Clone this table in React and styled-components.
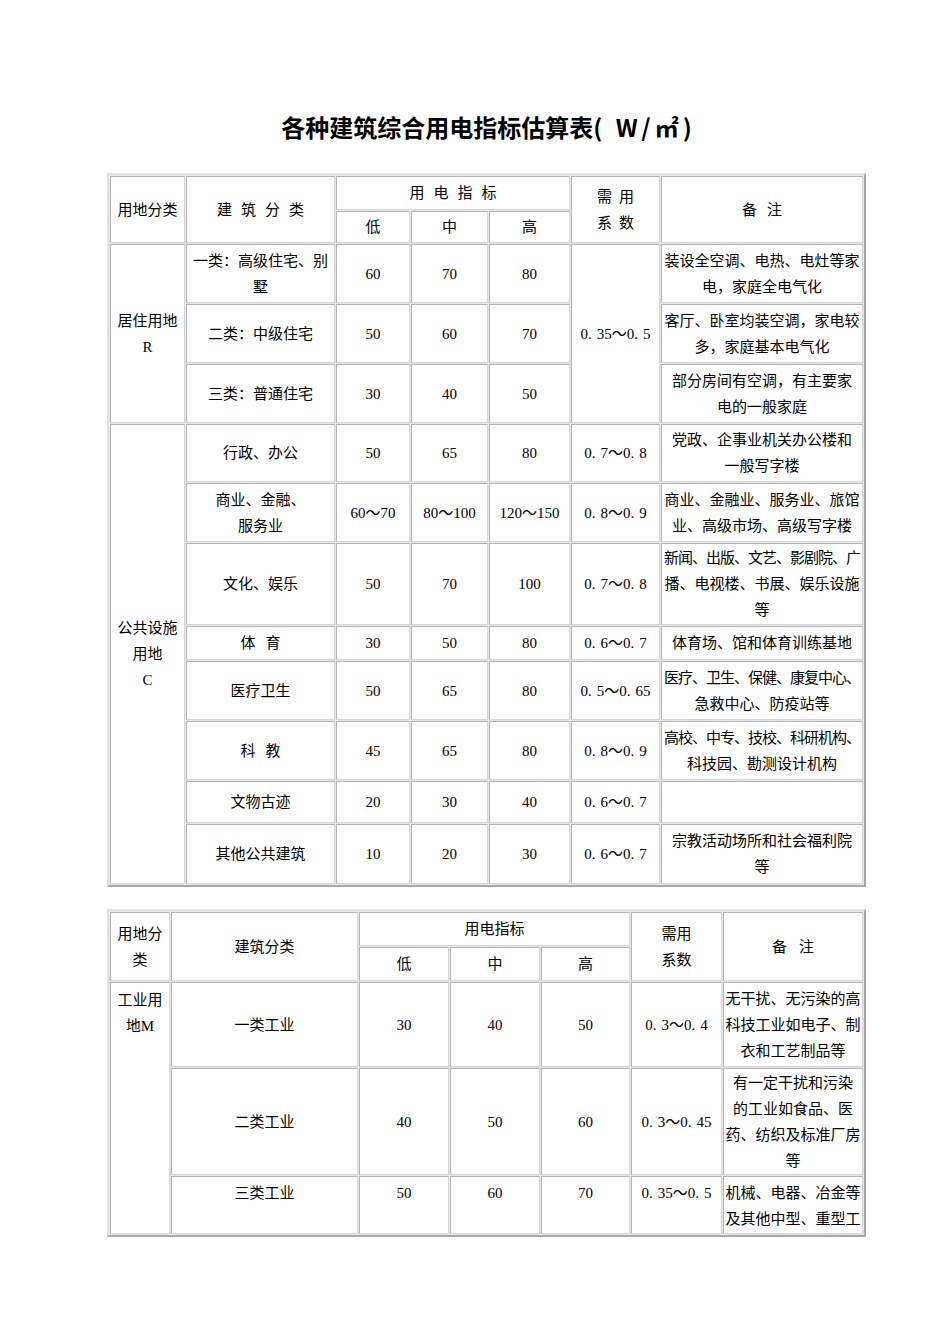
import React from 'react';
import styled, { createGlobalStyle } from 'styled-components';

const GlobalStyle = createGlobalStyle`
  html, body {
    margin: 0;
    padding: 0;
    background: #fff;
  }
  body {
    font-family: "Liberation Serif", "Noto Sans CJK SC", serif;
    color: #000;
  }
`;

const Page = styled.div`
  width: 950px;
  min-height: 1344px;
  box-sizing: border-box;
  padding: 111px 0 0 107px;
`;

const Sheet = styled.div`
  width: 759px;
  display: flex;
  flex-direction: column;
  gap: 22px;
`;

const Title = styled.h1`
  margin: 0 0 8px;
  font: bold 24px/32px "Noto Sans CJK SC", sans-serif;
  text-align: center;
  color: #000;
`;

const Unit = styled.span`
  letter-spacing: 4px;
  margin-right: -4px;
`;

const Table = styled.table`
  width: 759px;
  table-layout: fixed;
  border-collapse: separate;
  border-spacing: 1px;
  border: 2px solid;
  border-color: #e2e2e2 #a8a8a8 #a8a8a8 #e2e2e2;
  background: #e6e6e6;
  font-size: 15px;
  line-height: 26px;
`;

const Row = styled.tr`
  height: ${({ $h }) => $h}px;

  ${({ $top }) =>
    $top &&
    `
    & > td {
      vertical-align: top;
      padding-top: ${$top}px;
    }
  `}
`;

const Cell = styled.td`
  border: 1px solid;
  border-color: #b4b4b4 #d6d6d6 #d6d6d6 #b4b4b4;
  background: #fff;
  padding: ${({ $top }) => ($top ? `${$top}px 1px 0` : '0 1px')};
  text-align: center;
  vertical-align: ${({ $top }) => ($top ? 'top' : 'middle')};
  white-space: nowrap;
  overflow: hidden;
`;

const Spread = styled.span`
  letter-spacing: ${({ $gap }) => $gap}px;
  margin-right: -${({ $gap }) => $gap}px;
`;

const Tight = styled.span`
  letter-spacing: -1px;
`;

const Dot = styled.span`
  margin-right: 5px;
`;

// decimals are set with a wide point, as in the original document font
const Num = ({ value }) => {
  const parts = value.split('.');
  return parts.map((p, i) => (
    <React.Fragment key={i}>
      {i > 0 && <Dot>.</Dot>}
      {p}
    </React.Fragment>
  ));
};

const Cols = ({ widths }) => (
  <colgroup>
    {widths.map((w, i) => (
      <col key={i} style={{ width: w }} />
    ))}
  </colgroup>
);

const Vals = ({ items }) =>
  items.map((v, i) => (
    <Cell key={i}>
      <Num value={v} />
    </Cell>
  ));

const App = () => (
  <>
    <GlobalStyle />
    <Page>
      <Sheet>
        <Title>
          各种建筑综合用电指标估算表<Unit>( W/㎡)</Unit>
        </Title>

        <Table>
          <Cols widths={[75, 149, 74, 77, 81, 89, 202]} />
          <tbody>
            <Row $h={34}>
              <Cell rowSpan={2}>用地分类</Cell>
              <Cell rowSpan={2}>
                <Spread $gap={9}>建筑分类</Spread>
              </Cell>
              <Cell colSpan={3}>
                <Spread $gap={9}>用电指标</Spread>
              </Cell>
              <Cell rowSpan={2}>
                <Spread $gap={7}>需用</Spread>
                <br />
                <Spread $gap={7}>系数</Spread>
              </Cell>
              <Cell rowSpan={2}>
                <Spread $gap={10}>备注</Spread>
              </Cell>
            </Row>
            <Row $h={32}>
              <Vals items={['低', '中', '高']} />
            </Row>

            <Row $h={59}>
              <Cell rowSpan={3}>
                居住用地
                <br />R
              </Cell>
              <Cell>
                一类：高级住宅、别
                <br />墅
              </Cell>
              <Vals items={['60', '70', '80']} />
              <Cell rowSpan={3}>
                <Num value="0.35～0.5" />
              </Cell>
              <Cell>
                装设全空调、电热、电灶等家
                <br />电，家庭全电气化
              </Cell>
            </Row>
            <Row $h={59}>
              <Cell>二类：中级住宅</Cell>
              <Vals items={['50', '60', '70']} />
              <Cell>
                客厅、卧室均装空调，家电较
                <br />多，家庭基本电气化
              </Cell>
            </Row>
            <Row $h={59}>
              <Cell>三类：普通住宅</Cell>
              <Vals items={['30', '40', '50']} />
              <Cell>
                部分房间有空调，有主要家
                <br />电的一般家庭
              </Cell>
            </Row>

            <Row $h={58}>
              <Cell rowSpan={8}>
                公共设施
                <br />
                用地
                <br />C
              </Cell>
              <Cell>行政、办公</Cell>
              <Vals items={['50', '65', '80', '0.7～0.8']} />
              <Cell>
                党政、企事业机关办公楼和
                <br />
                一般写字楼
              </Cell>
            </Row>
            <Row $h={59}>
              <Cell>
                商业、金融、
                <br />
                服务业
              </Cell>
              <Vals items={['60～70', '80～100', '120～150', '0.8～0.9']} />
              <Cell>
                商业、金融业、服务业、旅馆
                <br />
                业、高级市场、高级写字楼
              </Cell>
            </Row>
            <Row $h={82}>
              <Cell>文化、娱乐</Cell>
              <Vals items={['50', '70', '100', '0.7～0.8']} />
              <Cell>
                <Tight>新闻、出版、文艺、影剧院、广</Tight>
                <br />
                播、电视楼、书展、娱乐设施
                <br />等
              </Cell>
            </Row>
            <Row $h={34}>
              <Cell>
                <Spread $gap={10}>体育</Spread>
              </Cell>
              <Vals items={['30', '50', '80', '0.6～0.7']} />
              <Cell>体育场、馆和体育训练基地</Cell>
            </Row>
            <Row $h={59}>
              <Cell>医疗卫生</Cell>
              <Vals items={['50', '65', '80', '0.5～0.65']} />
              <Cell>
                <Tight>医疗、卫生、保健、康复中心、</Tight>
                <br />
                急救中心、防疫站等
              </Cell>
            </Row>
            <Row $h={59}>
              <Cell>
                <Spread $gap={10}>科教</Spread>
              </Cell>
              <Vals items={['45', '65', '80', '0.8～0.9']} />
              <Cell>
                <Tight>高校、中专、技校、科研机构、</Tight>
                <br />
                科技园、勘测设计机构
              </Cell>
            </Row>
            <Row $h={42}>
              <Cell>文物古迹</Cell>
              <Vals items={['20', '30', '40', '0.6～0.7']} />
              <Cell />
            </Row>
            <Row $h={60}>
              <Cell>其他公共建筑</Cell>
              <Vals items={['10', '20', '30', '0.6～0.7']} />
              <Cell>
                宗教活动场所和社会福利院
                <br />等
              </Cell>
            </Row>
          </tbody>
        </Table>

        <Table>
          <Cols widths={[60, 187, 90, 90, 89, 91, 140]} />
          <tbody>
            <Row $h={34}>
              <Cell rowSpan={2}>
                用地分
                <br />类
              </Cell>
              <Cell rowSpan={2}>建筑分类</Cell>
              <Cell colSpan={3}>用电指标</Cell>
              <Cell rowSpan={2}>
                需用
                <br />
                系数
              </Cell>
              <Cell rowSpan={2}>
                <Spread $gap={12}>备注</Spread>
              </Cell>
            </Row>
            <Row $h={34}>
              <Vals items={['低', '中', '高']} />
            </Row>

            <Row $h={85}>
              <Cell rowSpan={3} $top={4}>
                工业用
                <br />
                地M
              </Cell>
              <Cell>一类工业</Cell>
              <Vals items={['30', '40', '50', '0.3～0.4']} />
              <Cell>
                无干扰、无污染的高
                <br />
                科技工业如电子、制
                <br />
                衣和工艺制品等
              </Cell>
            </Row>
            <Row $h={107}>
              <Cell>二类工业</Cell>
              <Vals items={['40', '50', '60', '0.3～0.45']} />
              <Cell>
                有一定干扰和污染
                <br />
                的工业如食品、医
                <br />
                药、纺织及标准厂房
                <br />等
              </Cell>
            </Row>
            <Row $h={58} $top={3}>
              <Cell>三类工业</Cell>
              <Vals items={['50', '60', '70', '0.35～0.5']} />
              <Cell>
                机械、电器、冶金等
                <br />
                及其他中型、重型工
              </Cell>
            </Row>
          </tbody>
        </Table>
      </Sheet>
    </Page>
  </>
);

export default App;
